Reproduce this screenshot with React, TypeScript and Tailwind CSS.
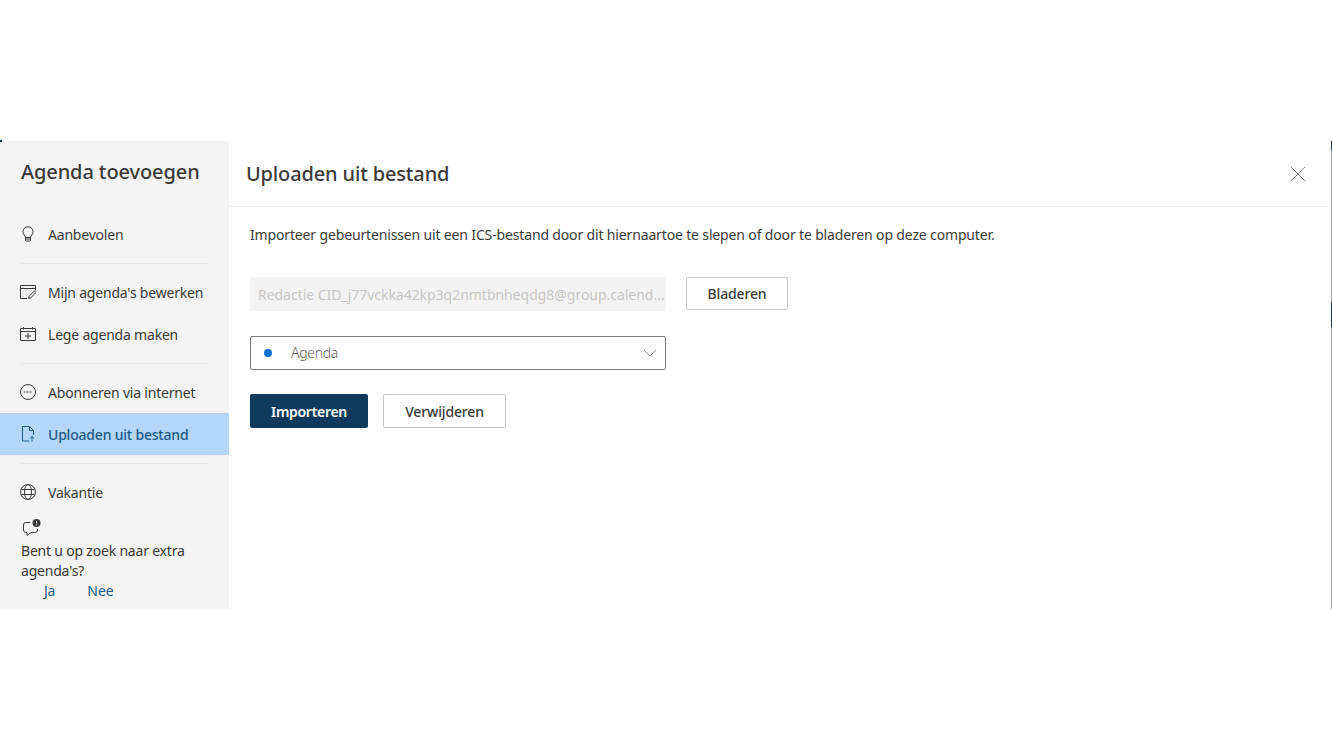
import type { ReactNode } from "react";

const iconProps = {
  width: 16,
  height: 16,
  viewBox: "0 0 16 16",
  fill: "none",
  stroke: "#3b3a39",
  strokeWidth: 1,
};

const BulbIcon = () => (
  <svg {...iconProps}>
    <path d="M5.5 11.5C5 9.5 3 8.5 3 5.7a5 5 0 0 1 10 0c0 2.8-2 3.8-2.5 5.8z" />
    <path d="M5.5 11.5V14a1 1 0 0 0 1 1h3a1 1 0 0 0 1-1v-2.500M5.500 13h5" />
  </svg>
);

const EditIcon = () => (
  <svg {...iconProps}>
    <path d="M7 14.500H.5v-13h15v5" />
    <path d="M.5 4.500h15" />
    <path d="M8.500 14.500l.7-2.500 5.300-5 1.500 1.500-5.200 5.200z" />
  </svg>
);

const NewCalIcon = () => (
  <svg {...iconProps}>
    <path d="M.5 2.500h15v12H.5zM.5 5.500h15M3.500 1v2.500M12.500 1v2.500M8 7v6M5 10h6" />
  </svg>
);

const SubscribeIcon = () => (
  <svg {...iconProps}>
    <circle cx="8" cy="8" r="7.500" />
    <path d="M3.500 8h9" strokeDasharray="2 1" />
  </svg>
);

const FileIcon = () => (
  <svg {...iconProps} stroke="#1d5a8c">
    <path d="M9 15H2.500V.5h7l4 4V9M9.500.5v4h4M12 15.500V10.500M10 12.500l2-2 2 2" />
  </svg>
);

const GlobeIcon = () => (
  <svg {...iconProps}>
    <circle cx="8" cy="8" r="7.500" />
    <ellipse cx="8" cy="8" rx="3.500" ry="7.500" />
    <path d="M1.200 5.500h13.600M1.200 10.500h13.600" />
  </svg>
);

const FeedbackIcon = () => (
  <svg width="20" height="18" viewBox="0 0 20 18" fill="none" stroke="#3b3a39" className="ml-px">
    <path d="M8 3.500H4A2.500 2.500 0 0 0 1.500 6v5A2.500 2.500 0 0 0 4 13.500h1v3l4-3h4a2.500 2.500 0 0 0 2.500-2.500v-1" />
    <circle cx="14.500" cy="4" r="4" fill="#3b3a39" stroke="none" />
    <path d="M14.500 1.800v2.700M14.500 5.400v.9" stroke="#fff" />
  </svg>
);

function NavItem({ icon, label, active }: { icon: ReactNode; label: string; active?: boolean }) {
  return (
    <div
      className={`flex h-[42px] items-center gap-[12px] pl-[20px] ${
        active ? "bg-[#b3d6fa] font-medium text-[#1d5a8c]" : "text-[#3b3a39]"
      }`}
    >
      <span className="flex w-[16px] shrink-0 justify-center">{icon}</span>
      <span className="text-[14px] tracking-[-0.2px]">{label}</span>
    </div>
  );
}

const Divider = () => <div className="mx-[21px] mt-[8px] mb-[7px] h-px bg-[#e8e8e8]" />;

export default function App() {
  return (
    <div className="h-[749px] overflow-hidden bg-white pt-[141px] font-['Noto_Sans',sans-serif]">
      <div className="relative flex h-[468px] border-r border-[#a19f9d]">
        {/* left navigation */}
        <aside className="w-[229px] shrink-0 bg-[#f4f4f4]">
          <h2 className="px-[21px] pt-[16px] text-[20px] leading-[30px] font-medium tracking-[-0.1px] text-[#3b3a39]">
            Agenda toevoegen
          </h2>
          <div className="mt-[26px]">
            <NavItem icon={<BulbIcon />} label="Aanbevolen" />
            <Divider />
            <NavItem icon={<EditIcon />} label="Mijn agenda's bewerken" />
            <NavItem icon={<NewCalIcon />} label="Lege agenda maken" />
            <Divider />
            <NavItem icon={<SubscribeIcon />} label="Abonneren via internet" />
            <NavItem icon={<FileIcon />} label="Uploaden uit bestand" active />
            <Divider />
            <NavItem icon={<GlobeIcon />} label="Vakantie" />
          </div>
          <div className="px-[21px] pt-[6px] text-[14px] leading-[20px] tracking-[-0.2px] text-[#3b3a39]">
            <FeedbackIcon />
            <p className="mt-[4px]">Bent u op zoek naar extra agenda's?</p>
            <div className="flex gap-[32px] pl-[23px] text-[#1d5a8c]">
              <span>Ja</span>
              <span className="tracking-normal">Nee</span>
            </div>
          </div>
        </aside>

        {/* main panel */}
        <main className="min-w-0 flex-1">
          <header className="flex h-[66px] items-center justify-between border-b border-[#ebebeb] pr-[25px] pl-[17px]">
            <h1 className="text-[20px] font-medium tracking-[-0.15px] text-[#3b3a39]">Uploaden uit bestand</h1>
            <svg width="16" height="16" viewBox="0 0 16 16" stroke="#8a8886">
              <path d="M1 1l14 14M15 1L1 15" />
            </svg>
          </header>
          <div className="pt-[18px] pl-[21px] text-[14px] tracking-[-0.15px]">
            <p className="leading-[20px] text-[#3b3a39]">
              Importeer gebeurtenissen uit een ICS-bestand door dit hiernaartoe te slepen of door te bladeren op deze computer.
            </p>
            <div className="mt-[32px] flex items-start gap-[20px]">
              <div className="flex h-[34px] w-[416px] items-center overflow-hidden bg-[#f3f3f3] px-[8px] tracking-[-0.03px] whitespace-nowrap text-[#c8c6c4]">
                Redactie CID_j77vckka42kp3q2nmtbnheqdg8@group.calend...
              </div>
              <button className="h-[33px] w-[102px] rounded-[2px] border border-[#c8c6c4] font-medium text-[#3b3a39]">
                Bladeren
              </button>
            </div>
            <div className="mt-[25px] flex h-[34px] w-[416px] items-center rounded-[2px] border border-[#7a7a7a] pr-[8px] pl-[13px] text-[#605e5c]">
              <span className="h-[8px] w-[8px] rounded-full bg-[#0f6fd1]" />
              <span className="ml-[19px] flex-1 pb-px font-light tracking-[-0.3px]">Agenda</span>
              <svg width="14" height="8" viewBox="0 0 14 8" fill="none" stroke="#8a8886">
                <path d="M1 1l6 6 6-6" />
              </svg>
            </div>
            <div className="mt-[24px] flex gap-[15px]">
              <button className="h-[34px] w-[118px] rounded-[2px] bg-[#0f3a5c] font-semibold tracking-[-0.3px] text-white">
                Importeren
              </button>
              <button className="h-[34px] w-[123px] rounded-[2px] border border-[#c8c6c4] font-medium text-[#3b3a39]">
                Verwijderen
              </button>
            </div>
          </div>
        </main>
        {/* clipped window edges behind the dialog */}
        <span className="absolute -top-px left-0 h-[2px] w-[2px] bg-[#0f3a5c]" />
        <span className="absolute top-0 -right-px h-[9px] w-px bg-[#0f3a5c]" />
        <span className="absolute top-[161px] -right-px h-[25px] w-px bg-[#0f3a5c]" />
      </div>
    </div>
  );
}
